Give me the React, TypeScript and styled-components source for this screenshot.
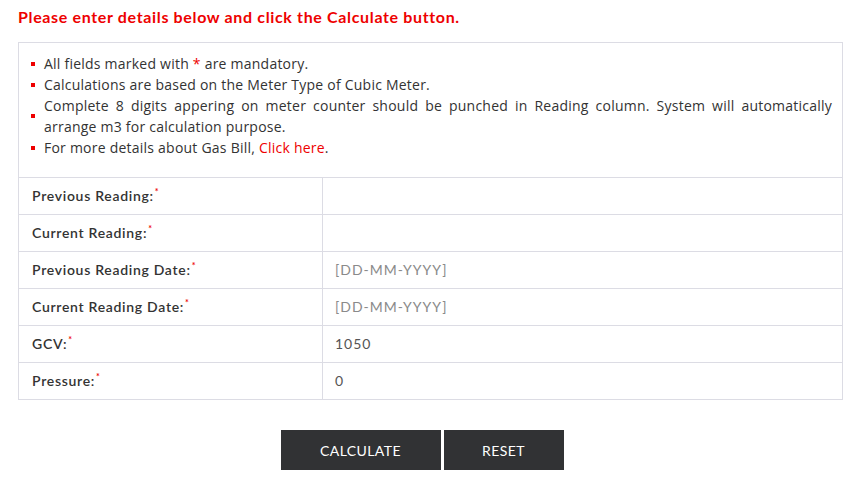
import React from 'react';
import styled, { createGlobalStyle } from 'styled-components';

const GlobalStyle = createGlobalStyle`
  body {
    margin: 0;
    background: #fff;
    font-family: Lato, "Liberation Sans", sans-serif;
  }
`;

const Page = styled.div`
  padding: 0 7px 0 18px;
`;

const Title = styled.h3`
  margin: 6px 0 0;
  height: 36px;
  font-size: 16px;
  line-height: 22px;
  font-weight: 700;
  letter-spacing: 0.65px;
  color: #ee0000;
`;

const Table = styled.table`
  width: 825px;
  border-collapse: collapse;
  border: 1px solid #dcdce4;
`;

const NotesCell = styled.td`
  border: 1px solid #dcdce4;
  padding: 10px 10px 19px 12px;
`;

const Notes = styled.ul`
  margin: 0;
  padding: 0;
  list-style: none;
  font-family: "Open Sans", sans-serif;
  font-size: 14px;
  line-height: 21px;
  letter-spacing: 0.23px;
  color: #333;
`;

const Note = styled.li`
  display: flex;
  align-items: center;
  gap: 9px;
  text-align: justify;

  &::before {
    content: '';
    flex: none;
    width: 4px;
    height: 4px;
    background: #e00;
  }
`;

const Red = styled.span`
  color: #e00;
`;

const Link = styled.a`
  color: #e00;
  text-decoration: none;
`;

const Row = styled.tr`
  height: 37px;
`;

const Label = styled.td`
  width: 290px;
  padding: 0 0 2px 13px;
  border: 1px solid #dcdce4;
  font-size: 14px;
  font-weight: 600;
  letter-spacing: 0.7px;
  color: #333;
`;

const Star = styled.sup`
  color: #e00;
  font-size: 9px;
  margin-left: 1px;
`;

const Value = styled.td<{ $placeholder?: boolean }>`
  padding: 0 0 2px 12px;
  border: 1px solid #dcdce4;
  font-size: 14px;
  letter-spacing: 1px;
  color: ${(p) => (p.$placeholder ? '#8a8a8a' : '#555')};
`;

const Actions = styled.div`
  display: flex;
  justify-content: center;
  gap: 3px;
  margin-top: 30px;
  padding-right: 16px;
`;

const Button = styled.button<{ $w: number }>`
  width: ${(p) => p.$w}px;
  height: 40px;
  border: none;
  background: #313234;
  color: #fff;
  font-family: Lato, sans-serif;
  font-size: 14px;
  letter-spacing: 0.4px;
  text-transform: uppercase;
  cursor: pointer;
`;

const fields = [
  { label: 'Previous Reading:', value: '' },
  { label: 'Current Reading:', value: '' },
  { label: 'Previous Reading Date:', value: '[DD-MM-YYYY]', placeholder: true },
  { label: 'Current Reading Date:', value: '[DD-MM-YYYY]', placeholder: true },
  { label: 'GCV:', value: '1050' },
  { label: 'Pressure:', value: '0' },
];

export default function App() {
  return (
    <Page>
      <GlobalStyle />
      <Title>Please enter details below and click the Calculate button.</Title>
      <Table>
        <tbody>
          <tr>
            <NotesCell colSpan={2}>
              <Notes>
                <Note>
                  <span>
                    All fields marked with <Red>*</Red> are mandatory.
                  </span>
                </Note>
                <Note>Calculations are based on the Meter Type of Cubic Meter.</Note>
                <Note>
                  Complete 8 digits appering on meter counter should be punched in Reading column. System will
                  automatically arrange m3 for calculation purpose.
                </Note>
                <Note>
                  <span>
                    For more details about Gas Bill, <Link href="#">Click here</Link>.
                  </span>
                </Note>
              </Notes>
            </NotesCell>
          </tr>
          {fields.map((f) => (
            <Row key={f.label}>
              <Label>
                {f.label}
                <Star>*</Star>
              </Label>
              <Value $placeholder={f.placeholder}>{f.value}</Value>
            </Row>
          ))}
        </tbody>
      </Table>
      <Actions>
        <Button $w={160}>Calculate</Button>
        <Button $w={120}>Reset</Button>
      </Actions>
    </Page>
  );
}
